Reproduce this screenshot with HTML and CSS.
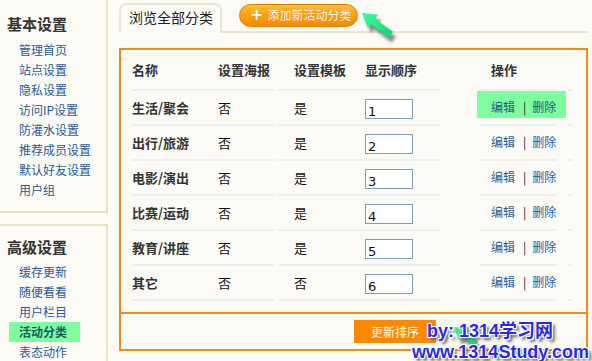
FILE: index.html
```html
<!DOCTYPE html>
<html lang="zh-CN">
<head>
<meta charset="utf-8">
<title>活动分类</title>
<link rel="stylesheet" href="styles.css">
</head>
<body>
<div class="page">
  <aside class="sidebar">
    <div class="box box-basic">
      <h3 class="box-title">基本设置</h3>
      <ul class="menu">
        <li><a href="#">管理首页</a></li>
        <li><a href="#">站点设置</a></li>
        <li><a href="#">隐私设置</a></li>
        <li><a href="#">访问IP设置</a></li>
        <li><a href="#">防灌水设置</a></li>
        <li><a href="#">推荐成员设置</a></li>
        <li><a href="#">默认好友设置</a></li>
        <li><a href="#">用户组</a></li>
      </ul>
    </div>
    <div class="box box-adv">
      <h3 class="box-title">高级设置</h3>
      <ul class="menu">
        <li><a href="#">缓存更新</a></li>
        <li><a href="#">随便看看</a></li>
        <li><a href="#">用户栏目</a></li>
        <li><a href="#" class="active">活动分类</a></li>
        <li><a href="#">表态动作</a></li>
      </ul>
    </div>
  </aside>

  <main class="main">
    <div class="tabbar">
      <div class="tab">浏览全部分类</div>
      <a href="#" class="add-btn"><span class="plus">+</span>添加新活动分类</a>
    </div>

    <div class="panel">
      <div class="grid">
        <div class="row head">
          <div class="c c-name">名称</div>
          <div class="c c-poster">设置海报</div>
          <div class="sp"></div>
          <div class="c c-tpl">设置模板</div>
          <div class="c c-order">显示顺序</div>
          <div class="sp"></div>
          <div class="c c-op">操作</div>
          <div class="sp"></div>
          <div class="c"></div>
        </div>

        <div class="row">
          <div class="c c-name">生活/聚会</div>
          <div class="c c-poster">否</div>
          <div class="sp"></div>
          <div class="c c-tpl">是</div>
          <div class="c c-order"><input class="order" type="text" value="1"></div>
          <div class="sp"></div>
          <div class="c c-op"><div class="ops hl"><a href="#">编辑</a><span class="bar">|</span><a href="#">删除</a></div></div>
          <div class="sp"></div>
          <div class="c"></div>
        </div>

        <div class="row">
          <div class="c c-name">出行/旅游</div>
          <div class="c c-poster">否</div>
          <div class="sp"></div>
          <div class="c c-tpl">是</div>
          <div class="c c-order"><input class="order" type="text" value="2"></div>
          <div class="sp"></div>
          <div class="c c-op"><div class="ops"><a href="#">编辑</a><span class="bar">|</span><a href="#">删除</a></div></div>
          <div class="sp"></div>
          <div class="c"></div>
        </div>

        <div class="row">
          <div class="c c-name">电影/演出</div>
          <div class="c c-poster">否</div>
          <div class="sp"></div>
          <div class="c c-tpl">是</div>
          <div class="c c-order"><input class="order" type="text" value="3"></div>
          <div class="sp"></div>
          <div class="c c-op"><div class="ops"><a href="#">编辑</a><span class="bar">|</span><a href="#">删除</a></div></div>
          <div class="sp"></div>
          <div class="c"></div>
        </div>

        <div class="row">
          <div class="c c-name">比赛/运动</div>
          <div class="c c-poster">否</div>
          <div class="sp"></div>
          <div class="c c-tpl">是</div>
          <div class="c c-order"><input class="order" type="text" value="4"></div>
          <div class="sp"></div>
          <div class="c c-op"><div class="ops"><a href="#">编辑</a><span class="bar">|</span><a href="#">删除</a></div></div>
          <div class="sp"></div>
          <div class="c"></div>
        </div>

        <div class="row">
          <div class="c c-name">教育/讲座</div>
          <div class="c c-poster">否</div>
          <div class="sp"></div>
          <div class="c c-tpl">是</div>
          <div class="c c-order"><input class="order" type="text" value="5"></div>
          <div class="sp"></div>
          <div class="c c-op"><div class="ops"><a href="#">编辑</a><span class="bar">|</span><a href="#">删除</a></div></div>
          <div class="sp"></div>
          <div class="c"></div>
        </div>

        <div class="row">
          <div class="c c-name">其它</div>
          <div class="c c-poster">否</div>
          <div class="sp"></div>
          <div class="c c-tpl">否</div>
          <div class="c c-order"><input class="order" type="text" value="6"></div>
          <div class="sp"></div>
          <div class="c c-op"><div class="ops"><a href="#">编辑</a><span class="bar">|</span><a href="#">删除</a></div></div>
          <div class="sp"></div>
          <div class="c"></div>
        </div>
      </div>

      <div class="footer">
        <button class="sort-btn" type="button">更新排序</button>
      </div>
    </div>
  </main>
</div>

<svg class="arrows" width="592" height="361" viewBox="0 0 592 361" aria-hidden="true">
  <defs>
    <filter id="blur" x="-50%" y="-50%" width="200%" height="200%">
      <feGaussianBlur stdDeviation="1.6"/>
    </filter>
    <linearGradient id="grn" x1="0" y1="0" x2="1" y2="0">
      <stop offset="0" stop-color="#3dff9a"/>
      <stop offset="1" stop-color="#10d872"/>
    </linearGradient>
  </defs>
  <g transform="translate(365 18) rotate(37)">
    <polygon points="0,0 14,-8.5 14,-3.5 36,-3.5 36,3.5 14,3.5 14,8.5" fill="#555" opacity="0.7" filter="url(#blur)"/>
  </g>
  <g transform="translate(362 13) rotate(37)">
    <polygon points="0,0 14,-8.5 14,-3.5 36,-3.5 36,3.5 14,3.5 14,8.5" fill="url(#grn)"/>
  </g>
  <g transform="translate(457 332) rotate(37)">
    <polygon points="0,0 12,-7.5 12,-3 28,-3 28,3 12,3 12,7.5" fill="#555" opacity="0.7" filter="url(#blur)"/>
  </g>
  <g transform="translate(454 327) rotate(37)">
    <polygon points="0,0 12,-7.5 12,-3 28,-3 28,3 12,3 12,7.5" fill="url(#grn)"/>
  </g>
</svg>

<div class="watermark">
  <div class="wm-line1">by: 1314学习网</div>
  <div class="wm-line2">www.1314Study.com</div>
</div>
</body>
</html>
```

FILE: styles.css
```css
html, body {
  margin: 0;
  padding: 0;
}

body {
  background: #fcfbf6;
  font-family: "Noto Sans CJK SC", "Noto Sans", sans-serif;
  font-size: 12px;
  color: #333;
  width: 592px;
  height: 361px;
  overflow: hidden;
  position: relative;
}

.page {
  display: flex;
  align-items: flex-start;
}

/* ---------- sidebar ---------- */
.sidebar {
  flex: none;
  width: 110px;
  margin-left: -2px;
  display: flex;
  flex-direction: column;
  gap: 11px;
}

.box {
  border: 2px solid #e9e3c4;
  box-sizing: border-box;
}

.box-basic {
  margin-top: -2px;
  padding: 14px 0 11px;
}

.box-adv {
  padding: 11px 0 30px;
}

.box-title {
  margin: 0 0 6px;
  padding-left: 7px;
  font-size: 15px;
  line-height: 20px;
  font-weight: bold;
  color: #333;
}

.box-adv .box-title {
  margin-bottom: 5px;
}

.menu {
  list-style: none;
  margin: 0;
  padding: 0;
  display: flex;
  flex-direction: column;
  align-items: flex-start;
}

.menu a {
  display: block;
  margin-left: 9px;
  padding: 0 13px 0 10px;
  line-height: 20px;
  color: #2a5a96;
  text-decoration: none;
  white-space: nowrap;
}

.menu a.active {
  background: #80ff9f;
  color: #17605e;
  font-weight: bold;
}

/* ---------- main ---------- */
.main {
  flex: none;
  width: 469px;
  margin-left: 11px;
}

.tabbar {
  display: flex;
  align-items: flex-start;
  height: 28px;
  padding-top: 3px;
  border-bottom: 2px solid #ebe6cf;
  width: 469px;
}

.tab {
  box-sizing: border-box;
  width: 103px;
  height: 30px;
  border: 2px solid #ebe6cf;
  border-bottom: none;
  border-radius: 7px 7px 0 0;
  background: #fcfbf6;
  padding-left: 8px;
  font-size: 14px;
  line-height: 24px;
  color: #222;
  white-space: nowrap;
}

.add-btn {
  box-sizing: border-box;
  margin: 1px 0 0 17px;
  width: 119px;
  height: 23px;
  border-radius: 12px;
  border: 1px solid #e28300;
  background: linear-gradient(#ffc040, #ffa012 45%, #f58a00 100%);
  color: #fff;
  font-size: 12px;
  line-height: 20px;
  padding-left: 10px;
  text-decoration: none;
  white-space: nowrap;
  text-shadow: 0 0 1px #d27000;
}

.plus {
  font-size: 16px;
  font-weight: bold;
  margin-right: 4px;
  font-family: "DejaVu Sans", sans-serif;
}

.panel {
  box-sizing: border-box;
  width: 469px;
  margin-top: 15px;
  border: 2px solid #f98c10;
}

.grid {
  margin: 0 0 11px 11px;
  width: 440px;
}

.row {
  display: grid;
  grid-template-columns: 82px 61px 4px 76px 85px 39px 78px 11px 4px;
  height: 35px;
}

.row.head {
  height: 41px;
}

.c {
  border-bottom: 2px solid #efefef;
  display: flex;
  align-items: center;
  font-size: 13px;
  color: #111;
  white-space: nowrap;
}

.head .c {
  font-weight: bold;
  color: #333;
}

.c-name {
  font-weight: bold;
  color: #333;
}

.c-poster {
  padding-left: 4px;
}

.c-tpl {
  padding-left: 15px;
}

.c-order {
  padding-left: 10px;
}

.head .c-op {
  padding-left: 12px;
}

.row:not(.head) .c-op {
  align-items: flex-start;
}

.order {
  box-sizing: border-box;
  width: 48px;
  height: 20px;
  margin-top: 3px;
  border: 1px solid #7f9db9;
  background: #fff;
  padding: 4px 0 0 2px;
  font-family: "DejaVu Sans", sans-serif;
  font-size: 13px;
  line-height: 15px;
  color: #111;
}

.ops {
  flex: none;
  box-sizing: border-box;
  margin-left: -2px;
  width: 89px;
  height: 27px;
  padding: 9px 0 0 14px;
  line-height: 14px;
  font-size: 12px;
  white-space: nowrap;
}

.ops a {
  color: #2a5ea0;
  text-decoration: none;
}

.ops .bar {
  color: #222;
  margin: 0 6px 0 8px;
}

.ops.hl {
  background: #80ff9f;
}

.ops.hl a {
  color: #235a82;
}

.footer {
  border-top: 2px solid #f98c10;
  height: 35px;
  padding-left: 233px;
}

.sort-btn {
  display: block;
  margin-top: 6px;
  width: 82px;
  height: 23px;
  border: none;
  padding: 0;
  background: #ff8800;
  color: #fff;
  font-family: "Noto Sans CJK SC", sans-serif;
  font-size: 12px;
  line-height: 23px;
}

/* ---------- overlays ---------- */
.arrows {
  position: absolute;
  left: 0;
  top: 0;
  pointer-events: none;
}

.watermark {
  position: absolute;
  left: 427px;
  top: 321px;
  font-family: "Liberation Sans", "Noto Sans CJK SC", sans-serif;
  font-weight: bold;
  font-size: 18px;
  line-height: 21px;
  color: #2a2ae4;
  white-space: nowrap;
  text-shadow: 1px 1px 0 #fff, -1px -1px 0 #fff, 1px -1px 0 #fff, -1px 1px 0 #fff, 3px 3px 3px #555;
  pointer-events: none;
}

.wm-line2 {
  margin-left: -15px;
}
```
